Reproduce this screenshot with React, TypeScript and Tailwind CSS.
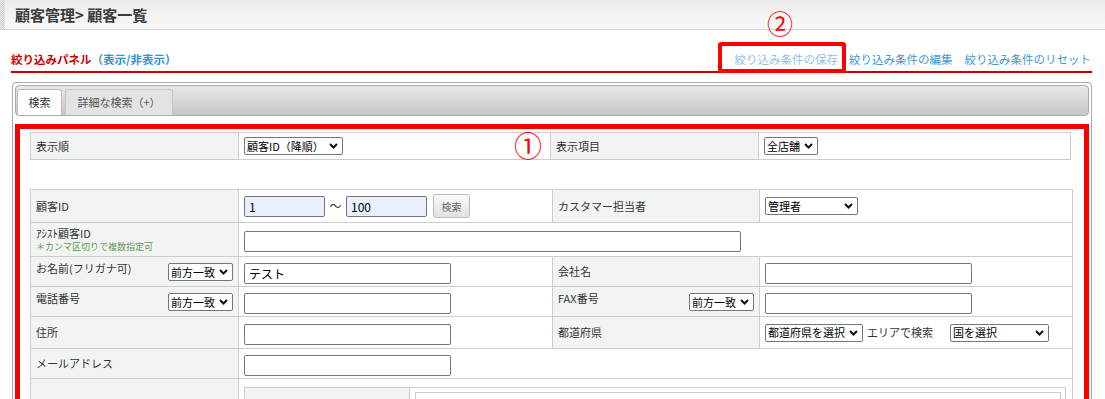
import type { ReactNode } from 'react';

const LABEL = 'bg-[#f2f3f3] border border-[#cccccc] px-[5px] text-[11px] text-[#333] align-middle';
const VALUE = 'border border-[#cccccc] px-[5px] align-middle';

function Chevron() {
  return (
    <svg width="9" height="6" viewBox="0 0 9 6" className="shrink-0">
      <path d="M1 1l3.5 3.5L8 1" fill="none" stroke="#111" strokeWidth="2" />
    </svg>
  );
}

function Select({ label, w }: { label: string; w: string }) {
  return (
    <div className={`${w} h-[18px] flex items-center justify-between border border-[#767676] rounded-[2px] bg-white pl-[2px] pr-[4px] text-[11px] leading-none text-black shrink-0`}>
      <span>{label}</span>
      <Chevron />
    </div>
  );
}

function Field({ w, value = '', blue = false }: { w: string; value?: string; blue?: boolean }) {
  return (
    <input
      readOnly
      value={value}
      className={`${w} h-[21px] border border-[#767676] rounded-[2px] ${blue ? 'bg-[#e8f0fe]' : 'bg-white'} px-[4px] text-[12px] text-black outline-none shrink-0`}
    />
  );
}

function LabelWithSelect({ text }: { text: string }) {
  return (
    <td className="bg-[#f2f3f3] border border-[#cccccc] pl-[5px] pr-[5px] text-[11px] text-[#333] align-top">
      <div className="flex justify-between items-start pt-[4px]">
        <span className="leading-[14px]">{text}</span>
        <div className="mt-[2px]">
          <Select label="前方一致" w="w-[65px]" />
        </div>
      </div>
    </td>
  );
}

function Link({ children, className = '' }: { children: ReactNode; className?: string }) {
  return <span className={`text-[11.5px] leading-[16px] ${className}`}>{children}</span>;
}

export default function App() {
  return (
    <div className="w-[1105px] h-[399px] overflow-hidden relative bg-white font-['Noto_Sans_CJK_JP','Noto_Sans',sans-serif]">
      {/* page title */}
      <div className="h-[30px] flex border-b border-[#d6d6d6] bg-gradient-to-b from-[#ebebeb] to-[#f9f9f9]">
        <div className="w-[5px] bg-[repeating-conic-gradient(#cfcfcf_0%_25%,#e9e9e9_0%_50%)] bg-[length:2px_2px]" />
        <h1 className="pl-[10px] text-[15px] font-bold text-[#3a3a3a] leading-[29px]">顧客管理&gt; 顧客一覧</h1>
      </div>

      {/* filter header */}
      <div className="ml-[11px] mr-[13px] h-[43px] border-b-2 border-[#cc0000] flex items-end justify-between pb-[4px]">
        <span className="text-[11.5px] font-bold leading-[16px] text-[#cc0000]">
          絞り込みパネル<span className="text-[#2f93cf]">（表示/非表示）</span>
        </span>
        <div className="flex pr-[1px]">
          <Link className="text-[#8ec3e6]">絞り込み条件の保存</Link>
          <Link className="ml-[11px] text-[#3c9ad3]">絞り込み条件の編集</Link>
          <Link className="ml-[12px] text-[#3c9ad3]">絞り込み条件のリセット</Link>
        </div>
      </div>

      {/* tab panel */}
      <div className="mt-[9px] ml-[12px] mr-[13px] border border-[#aaaaaa] rounded-[4px] p-[2px] h-[400px]">
        <div className="h-[31px] border border-[#aaaaaa] rounded-[4px] bg-gradient-to-b from-[#e8e8e8] to-[#c7c7c7] flex items-end pl-[1px]">
          <div className="w-[45px] h-[26px] bg-white border border-b-0 border-[#bbbbbb] rounded-t-[3px] flex items-center justify-center text-[11px] text-[#333]">
            検索
          </div>
          <div className="ml-[3px] w-[108px] h-[26px] bg-[#e3e3e3] border border-b-0 border-[#c8c8c8] rounded-t-[3px] flex items-center justify-center text-[11px] text-[#555]">
            詳細な検索（+）
          </div>
        </div>

        <div className="mt-[8px] border-[5px] border-[#ff0000] pt-[3px] pl-[10px] h-[320px]">
          <table className="border-collapse table-fixed w-[1040px]">
            <colgroup>
              <col className="w-[208px]" />
              <col className="w-[312px]" />
              <col className="w-[208px]" />
              <col className="w-[312px]" />
            </colgroup>
            <tbody>
              <tr className="h-[27px]">
                <td className={LABEL}>表示順</td>
                <td className={VALUE}>
                  <Select label="顧客ID（降順）" w="w-[99px]" />
                </td>
                <td className={LABEL}>表示項目</td>
                <td className={VALUE}>
                  <Select label="全店舗" w="w-[54px]" />
                </td>
              </tr>
            </tbody>
          </table>

          <table className="mt-[29px] border-collapse table-fixed w-[1042px]">
            <colgroup>
              <col className="w-[208px]" />
              <col className="w-[314px]" />
              <col className="w-[207px]" />
              <col className="w-[313px]" />
            </colgroup>
            <tbody>
              <tr className="h-[33px]">
                <td className={LABEL}>顧客ID</td>
                <td className={VALUE}>
                  <div className="flex items-center">
                    <Field w="w-[81px]" value="1" blue />
                    <span className="w-[21px] text-center text-[12px] text-[#333]">～</span>
                    <Field w="w-[81px]" value="100" blue />
                    <button className="ml-[6px] w-[37px] h-[24px] border border-[#bbbbbb] rounded-[3px] bg-gradient-to-b from-[#fafafa] to-[#e2e2e2] text-[10px] text-[#666]">
                      検索
                    </button>
                  </div>
                </td>
                <td className={LABEL}>カスタマー担当者</td>
                <td className={VALUE}>
                  <Select label="管理者" w="w-[93px]" />
                </td>
              </tr>
              <tr className="h-[34px]">
                <td className={LABEL}>
                  <div className="leading-[14px]">ｱｼｽﾄ顧客ID</div>
                  <div className="text-[9px] leading-[13px] text-[#5e9a52]">＊カンマ区切りで複数指定可</div>
                </td>
                <td className={VALUE} colSpan={3}>
                  <Field w="w-[497px]" />
                </td>
              </tr>
              <tr className="h-[30px]">
                <LabelWithSelect text="お名前(フリガナ可)" />
                <td className={VALUE}>
                  <Field w="w-[207px]" value="テスト" />
                </td>
                <td className={LABEL}>会社名</td>
                <td className={VALUE}>
                  <Field w="w-[207px]" />
                </td>
              </tr>
              <tr className="h-[30px]">
                <LabelWithSelect text="電話番号" />
                <td className={VALUE}>
                  <Field w="w-[207px]" />
                </td>
                <LabelWithSelect text="FAX番号" />
                <td className={VALUE}>
                  <Field w="w-[207px]" />
                </td>
              </tr>
              <tr className="h-[32px]">
                <td className={LABEL}>住所</td>
                <td className={VALUE}>
                  <Field w="w-[207px]" />
                </td>
                <td className={LABEL}>都道府県</td>
                <td className={VALUE}>
                  <div className="flex items-center">
                    <Select label="都道府県を選択" w="w-[98px]" />
                    <span className="ml-[4px] text-[11px] text-[#333]">エリアで検索</span>
                    <div className="ml-[17px]">
                      <Select label="国を選択" w="w-[99px]" />
                    </div>
                  </div>
                </td>
              </tr>
              <tr className="h-[30px]">
                <td className={LABEL}>メールアドレス</td>
                <td className={VALUE} colSpan={3}>
                  <Field w="w-[207px]" />
                </td>
              </tr>
              <tr>
                <td className={LABEL} />
                <td className="border border-[#cccccc] pl-[5px] pr-[6px] pt-[8px] pb-[8px] align-top" colSpan={3}>
                  <div className="flex border border-[#cccccc] h-[60px]">
                    <div className="w-[165px] bg-[#f2f3f3] border-r border-[#cccccc]" />
                    <div className="flex-1 pl-[5px] pt-[4px] pr-[4px]">
                      <div className="border border-[#cccccc] h-[40px]" />
                    </div>
                  </div>
                </td>
              </tr>
            </tbody>
          </table>
        </div>
      </div>

      {/* annotations */}
      <div className="absolute left-[718px] top-[42px] w-[128px] h-[31px] border-[4px] border-[#ff0000] rounded-[3px]" />
      <span className="absolute left-[767px] top-[8px] text-[26px] leading-[30px] text-[#ff0000]">②</span>
      <span className="absolute left-[514px] top-[130px] text-[28px] leading-[30px] text-[#ff0000]">①</span>
    </div>
  );
}
